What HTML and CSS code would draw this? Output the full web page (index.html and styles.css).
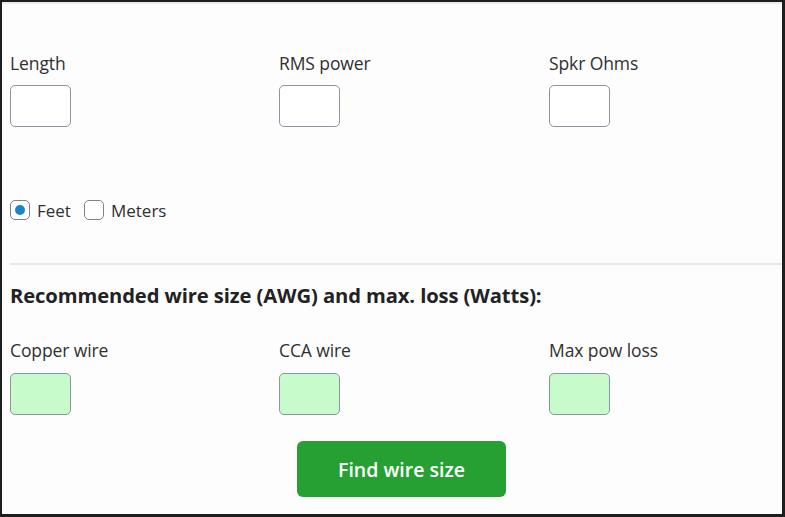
FILE: index.html
```html
<!DOCTYPE html>
<html>
<head>
<meta charset="utf-8">
<link rel="stylesheet" href="styles.css">
</head>
<body>
<div class="frame">
  <div class="topline"></div>
  <div class="content">
    <div class="row inputs">
      <div class="field"><label class="lbl">Length</label><input class="box" type="text"></div>
      <div class="field"><label class="lbl">RMS power</label><input class="box" type="text"></div>
      <div class="field"><label class="lbl">Spkr Ohms</label><input class="box" type="text"></div>
    </div>
    <div class="units">
      <span class="opt"><span class="radio checked"><span class="dot"></span></span><span class="opt-text">Feet</span></span>
      <span class="opt"><span class="radio"></span><span class="opt-text">Meters</span></span>
    </div>
    <hr class="sep">
    <h2 class="heading">Recommended wire size (AWG) and max. loss (Watts):</h2>
    <div class="row outputs">
      <div class="field"><label class="lbl">Copper wire</label><input class="box result" type="text"></div>
      <div class="field"><label class="lbl">CCA wire</label><input class="box result" type="text"></div>
      <div class="field"><label class="lbl">Max pow loss</label><input class="box result" type="text"></div>
    </div>
    <div class="actions"><button class="btn">Find wire size</button></div>
  </div>
</div>
</body>
</html>
```
FILE: styles.css
```css
* { box-sizing: border-box; }
html, body { margin: 0; padding: 0; background: #fdfdfd; }
body { font-family: "Open Sans", "Noto Sans", sans-serif; color: #333; }
.frame {
  width: 785px;
  height: 517px;
  border-left: 2px solid #1e1e1e;
  border-top: 2px solid #1e1e1e;
  border-right: 3px solid #1e1e1e;
  border-bottom: 3px solid #1e1e1e;
  background: #fdfdfd;
  overflow: hidden;
}
.topline { height: 2px; background: #ececec; }
.content { padding: 0 0 0 8px; }
.row { display: grid; grid-template-columns: 269px 270px 200px; }
.inputs { margin-top: 48px; }
.inputs .box { margin-top: 11px; }
.field { display: flex; flex-direction: column; align-items: flex-start; }
.lbl { font-size: 17.5px; line-height: 22px; color: #303030; font-weight: 500; letter-spacing: -0.1px; }
.box {
  margin-top: 10px;
  width: 61px;
  height: 42px;
  border: 1px solid #8d96a0;
  border-radius: 5px;
  background: #fff;
}
.result { background: #c8fbcc; }
.outputs .box { margin-top: 12px; }
.units { margin-top: 72px; display: flex; align-items: center; gap: 13px; height: 22px; }
.opt { display: flex; align-items: center; gap: 7px; }
.radio {
  width: 20px; height: 20px;
  border: 1.5px solid #7c848d;
  border-radius: 5px;
  background: #fff;
  display: flex; align-items: center; justify-content: center;
}
.dot { width: 10px; height: 10px; border-radius: 50%; background: #1a86c8; }
.opt-text { font-size: 17px; color: #303030; }
.sep { margin: 42px 0 0 0; border: 0; border-top: 2px solid #e8e8e8; }
.heading { margin: 18px 0 0 0; font-size: 20.2px; font-weight: 700; color: #222; line-height: 24px; letter-spacing: -0.1px; }
.outputs { margin-top: 32px; }
.actions { margin-top: 26px; padding-left: 287px; }
.btn {
  width: 209px; height: 56px;
  background: #27a033;
  border: 0;
  border-radius: 6px;
  color: #fff;
  font-family: "Open Sans", "Noto Sans", sans-serif;
  font-size: 19.5px;
  font-weight: 600;
}
```
